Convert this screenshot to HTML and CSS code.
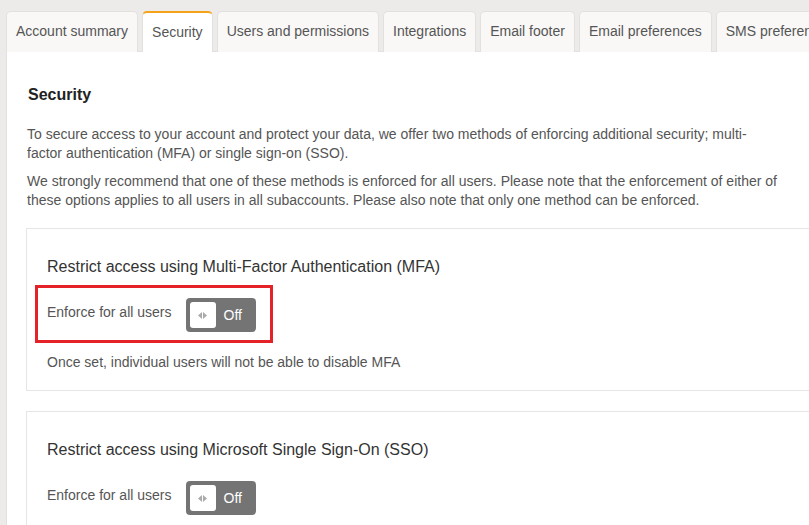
FILE: index.html
```html
<!DOCTYPE html>
<html lang="en">
<head>
  <meta charset="UTF-8">
  <title>Account settings - Security</title>
  <link rel="stylesheet" href="styles.css">
</head>
<body>

  <div class="page">
    <div class="tabs">
      <div class="tab">Account summary</div>
      <div class="tab active">Security</div>
      <div class="tab">Users and permissions</div>
      <div class="tab">Integrations</div>
      <div class="tab">Email footer</div>
      <div class="tab">Email preferences</div>
      <div class="tab">SMS preferences</div>
    </div>

    <div class="panel">
      <h2 class="panel-title">Security</h2>
      <p class="intro">To secure access to your account and protect your data, we offer two methods of enforcing additional security; multi-factor authentication (MFA) or single sign-on (SSO).</p>
      <p class="intro">We strongly recommend that one of these methods is enforced for all users. Please note that the enforcement of either of these options applies to all users in all subaccounts. Please also note that only one method can be enforced.</p>

      <div class="card">
        <h3 class="card-title">Restrict access using Multi-Factor Authentication (MFA)</h3>
        <div class="setting">
          <span class="setting-label">Enforce for all users</span>
          <button class="toggle">
            <span class="knob">
              <svg width="9" height="7" viewBox="0 0 9 7"><path d="M4 0 L0 3.5 L4 7 Z M5 0 L9 3.5 L5 7 Z" fill="#aaa"/></svg>
            </span>
            <span class="toggle-text">Off</span>
          </button>
          <span class="annotation"></span>
        </div>
        <p class="hint">Once set, individual users will not be able to disable MFA</p>
      </div>

      <div class="card">
        <h3 class="card-title">Restrict access using Microsoft Single Sign-On (SSO)</h3>
        <div class="setting">
          <span class="setting-label">Enforce for all users</span>
          <button class="toggle">
            <span class="knob">
              <svg width="9" height="7" viewBox="0 0 9 7"><path d="M4 0 L0 3.5 L4 7 Z M5 0 L9 3.5 L5 7 Z" fill="#aaa"/></svg>
            </span>
            <span class="toggle-text">Off</span>
          </button>
        </div>
        <p class="hint">Once set, users will have to sign in with Microsoft</p>
      </div>
    </div>
  </div>

</body>
</html>
```

FILE: styles.css
```css
* {
  box-sizing: border-box;
}

body {
  margin: 0;
  background: #ecebea;
  font-family: "Liberation Sans", Arial, sans-serif;
  font-size: 14px;
  color: #555;
  overflow: hidden;
}

.page {
  padding: 11px 0 0 6px;
  width: 900px;
}

.tabs {
  display: flex;
  gap: 4px;
  position: relative;
  z-index: 1;
  margin-bottom: -1px;
}

.tab {
  flex: none;
  height: 41px;
  line-height: 39px;
  padding: 0 9px;
  background: #f9f8f7;
  border: 1px solid #e2e1e0;
  border-bottom: none;
  border-radius: 5px 5px 0 0;
  color: #555;
  white-space: nowrap;
}

.tab.active {
  background: #fff;
  border-top: 2px solid #f7a21b;
  line-height: 38px;
}

.panel {
  background: #fff;
  border-top: 1px solid #e2e1e0;
  border-left: 1px solid #e2e1e0;
  padding: 34px 19px 30px 19px;
}

.panel-title {
  margin: 0 0 21px 2px;
  font-size: 16px;
  line-height: 18px;
  font-weight: bold;
  color: #222;
}

.intro {
  max-width: 752px;
  margin: 0 0 9px 1px;
  line-height: 19px;
}

.card {
  border: 1px solid #e6e6e6;
  padding: 27px 20px 18px 20px;
  margin-top: 18px;
  margin-bottom: 20px;
}

.card-title {
  margin: 0 0 20px 0;
  font-size: 16px;
  font-weight: normal;
  line-height: 22px;
  color: #333;
}

.setting {
  display: flex;
  align-items: flex-start;
  position: relative;
}

.setting-label {
  padding-top: 5px;
  margin-right: 14px;
  line-height: 19px;
}

.toggle {
  display: flex;
  align-items: center;
  width: 70px;
  height: 34px;
  padding: 0 4px;
  border: none;
  border-radius: 4px;
  background: #747474;
  font-family: inherit;
  font-size: 14px;
  cursor: pointer;
}

.knob {
  display: flex;
  align-items: center;
  justify-content: center;
  width: 26px;
  height: 26px;
  border-radius: 3px;
  background: #fff;
}

.toggle-text {
  margin-left: 8px;
  color: #fff;
}

/* red annotation frame drawn over the MFA setting */
.annotation {
  position: absolute;
  left: -12px;
  top: -13px;
  width: 238px;
  height: 58px;
  border: 3px solid #e52228;
  pointer-events: none;
}

.hint {
  margin: 21px 0 0 0;
  line-height: 19px;
}
```
